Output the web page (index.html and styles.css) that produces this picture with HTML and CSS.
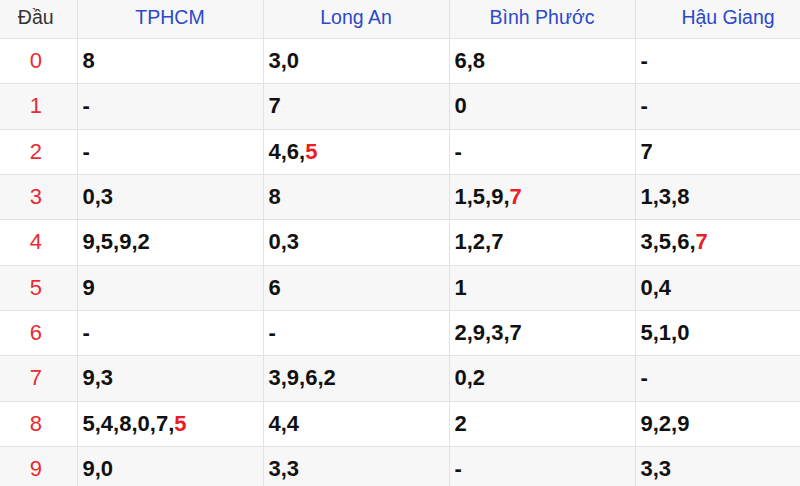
FILE: index.html
```html
<!DOCTYPE html>
<html lang="vi">
<head>
<meta charset="utf-8">
<title>Loto đầu</title>
<link rel="stylesheet" href="styles.css">
</head>
<body>
<table class="loto">
  <colgroup>
    <col class="c-head">
    <col class="c-prov">
    <col class="c-prov">
    <col class="c-prov">
    <col class="c-prov">
  </colgroup>
  <thead>
    <tr>
      <th class="dau">Đầu</th>
      <th class="prov">TPHCM</th>
      <th class="prov">Long An</th>
      <th class="prov">Bình Phước</th>
      <th class="prov">Hậu Giang</th>
    </tr>
  </thead>
  <tbody>
    <tr><td class="num">0</td><td>8</td><td>3,0</td><td>6,8</td><td>-</td></tr>
    <tr><td class="num">1</td><td>-</td><td>7</td><td>0</td><td>-</td></tr>
    <tr><td class="num">2</td><td>-</td><td>4,6,<span class="hi">5</span></td><td>-</td><td>7</td></tr>
    <tr><td class="num">3</td><td>0,3</td><td>8</td><td>1,5,9,<span class="hi">7</span></td><td>1,3,8</td></tr>
    <tr><td class="num">4</td><td>9,5,9,2</td><td>0,3</td><td>1,2,7</td><td>3,5,6,<span class="hi">7</span></td></tr>
    <tr><td class="num">5</td><td>9</td><td>6</td><td>1</td><td>0,4</td></tr>
    <tr><td class="num">6</td><td>-</td><td>-</td><td>2,9,3,7</td><td>5,1,0</td></tr>
    <tr><td class="num">7</td><td>9,3</td><td>3,9,6,2</td><td>0,2</td><td>-</td></tr>
    <tr><td class="num">8</td><td>5,4,8,0,7,<span class="hi">5</span></td><td>4,4</td><td>2</td><td>9,2,9</td></tr>
    <tr><td class="num">9</td><td>9,0</td><td>3,3</td><td>-</td><td>3,3</td></tr>
  </tbody>
</table>
</body>
</html>
```
FILE: styles.css
```css
html, body {
  margin: 0;
  padding: 0;
  background: #ffffff;
}

body {
  width: 800px;
  height: 486px;
  overflow: hidden;
  font-family: "Liberation Sans", Arial, sans-serif;
}

.loto {
  width: 821px;
  table-layout: fixed;
  border-collapse: collapse;
  border-spacing: 0;
}

.c-head { width: 77px; }
.c-prov { width: 186px; }

.loto th,
.loto td {
  border: 1px solid #e2e2e2;
  padding: 0;
}

.loto tr > :first-child { border-left: none; }
.loto thead th { border-top: none; }

.loto thead tr {
  height: 38.5px;
  background: #f7f7f7;
}

.loto thead th {
  font-weight: normal;
  font-size: 19.5px;
  text-align: center;
  vertical-align: middle;
  padding-bottom: 4px;
}

.loto .dau {
  color: #333333;
  padding-right: 5px;
}

.loto .prov {
  color: #2b49c8;
}

.loto tbody tr {
  height: 45.33px;
  background: #ffffff;
}

.loto tbody tr:nth-child(even) {
  background: #f7f7f7;
}

.loto tbody td {
  font-size: 22px;
  font-weight: bold;
  color: #111111;
  padding-left: 5px;
  vertical-align: middle;
  white-space: nowrap;
}

.loto tbody td.num {
  font-weight: normal;
  color: #ea2a31;
  text-align: center;
  padding-left: 0;
  padding-right: 5px;
}

.hi {
  color: #ee1c25;
}
```
